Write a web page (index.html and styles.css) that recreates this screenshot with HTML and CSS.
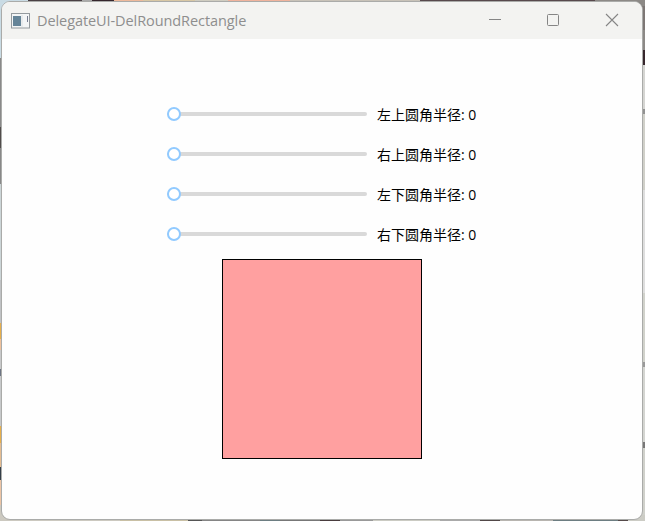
FILE: index.html
```
<!DOCTYPE html>
<html lang="zh-CN">
<head>
<meta charset="utf-8">
<title>DelegateUI-DelRoundRectangle</title>
<link rel="stylesheet" href="styles.css">
</head>
<body>
<main class="window">
  <header class="titlebar">
    <svg class="app-icon" width="19" height="16" viewBox="0 0 19 16">
      <rect x=".5" y=".5" width="18" height="14.5" fill="#f3f5f6" stroke="#949a9e"/>
      <rect x="2" y="3" width="8" height="10" fill="#658498"/>
      <path d="M11 2v12" stroke="#dce0e2"/>
      <path d="M16.5 3v6" stroke="#777d91"/>
    </svg>
    <h1 class="title">DelegateUI-DelRoundRectangle</h1>
    <div class="controls">
      <svg width="58" height="37" viewBox="0 0 58 37"><path d="M23 17.5h12" stroke="#858585"/></svg>
      <svg width="58" height="37" viewBox="0 0 58 37"><rect x="23.5" y="12.5" width="11" height="11" rx="1" fill="none" stroke="#858585"/></svg>
      <svg width="58" height="37" viewBox="0 0 58 37"><path d="M24 12l12 12M36 12L24 24" stroke="#858585" stroke-width="1.1"/></svg>
    </div>
  </header>
  <section class="content">
    <div class="row"><div class="slider"><span class="handle"></span></div><span class="label">左上圆角半径: 0</span></div>
    <div class="row"><div class="slider"><span class="handle"></span></div><span class="label">右上圆角半径: 0</span></div>
    <div class="row"><div class="slider"><span class="handle"></span></div><span class="label">左下圆角半径: 0</span></div>
    <div class="row"><div class="slider"><span class="handle"></span></div><span class="label">右下圆角半径: 0</span></div>
    <div class="preview"></div>
  </section>
</main>
</body>
</html>
```
FILE: styles.css
```
* { box-sizing: border-box; }

body {
  margin: 0;
  height: 521px;
  padding: 1px 2px 1px 1px;
  overflow: hidden;
  background:
    linear-gradient(90deg, #c9dbe4 0 28px, #4a4044 28px 82px, #aaa 82px 92px, #35262d 92px 114px, #eeb99b 114px 143px, #d8c7a4 143px 195px, #cfccc0 195px 228px, #f0b39d 228px 290px, #c8c2b8 290px 420px, #57494c 420px 595px, #8c8986 595px) 0 0 / 100% 6px no-repeat,
    linear-gradient(90deg, #ccc9c0 0 120px, #c9c0a5 120px 188px, #555 188px 202px, #858585 202px 260px, #6d7e82 260px 280px, #777 280px 320px, #493c3e 320px 340px, #999 340px 373px, #cbcbc3 373px 440px, #aaa 440px 480px, #514748 480px 500px, #b8b5b0 500px 553px, #6d7e82 553px 618px, #554a4a 618px 628px, #ccccc5 628px) 0 100% / 100% 6px no-repeat,
    linear-gradient(#c9dbe4 0 58px, #898989 58px 127px, #514c4b 127px 148px, #888 148px 184px, #ccd5d7 184px 280px, #c0c2c4 280px 323px, #e7af4b 323px 339px, #efc19b 339px 350px, #c8c9ca 350px 369px, #6d7482 369px 376px, #c7c9ca 376px 426px, #e7af4b 426px 443px, #e5bc90 443px 467px, #343e48 467px 480px, #edc4a4 480px 505px, #ccc9c0 505px) 0 0 / 12px 100% no-repeat,
    linear-gradient(#7d7775 0 30px, #8c8986 30px 50px, #37272d 50px 65px, #d5d5d2 65px 109px, #929292 109px 114px, #d0d0c9 114px 190px, #dedede 190px 293px, #d1d2cb 293px 362px, #999 362px 367px, #d4d5d1 367px 442px, #777 442px 448px, #d0d1cb 448px) 100% 0 / 12px 100% no-repeat,
    #ccc;
}

.window {
  height: 519px;
  border: 1px solid #aaaba9;
  border-radius: 9px;
  overflow: hidden;
  background: #fefefe;
}

.titlebar {
  display: flex;
  align-items: center;
  height: 37px;
  padding: 0 2px 0 9px;
  background: #f3f3f1;
}

.app-icon { flex: none; }

.title {
  margin: 0 0 0 7px;
  font: 400 14.5px/20px "Open Sans", "Noto Sans", sans-serif;
  letter-spacing: -0.08px;
  color: #8e8e8e;
  white-space: nowrap;
}

.controls {
  display: flex;
  margin-left: auto;
}

.controls svg { display: block; }

.content {
  display: flex;
  flex-direction: column;
  align-items: center;
  padding-top: 55px;
}

.row {
  display: flex;
  align-items: center;
  gap: 10px;
  width: 310px;
  height: 40px;
}

.slider {
  display: flex;
  align-items: center;
  flex: none;
  width: 200px;
  height: 4px;
  border-radius: 2px;
  background: #d9d9d9;
}

.handle {
  width: 14px;
  height: 14px;
  flex: none;
  border: 2px solid #91caff;
  border-radius: 50%;
  background: #fff;
}

.label {
  padding-top: 2px;
  font: 14px/20px "Open Sans", "Noto Sans CJK SC", sans-serif;
  color: #000;
  white-space: nowrap;
}

.preview {
  width: 200px;
  height: 200px;
  margin-top: 5px;
  border: 1px solid #000;
  background: #ffa0a0;
}
```
